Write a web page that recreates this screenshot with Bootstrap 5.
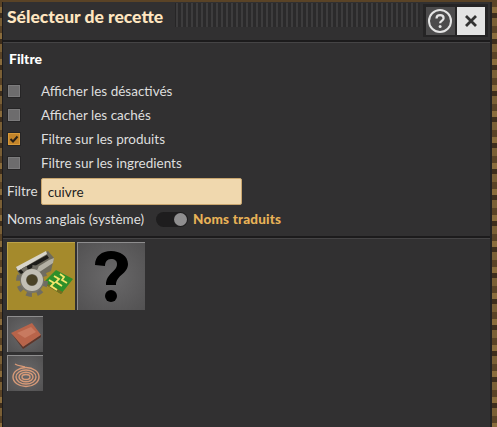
<!DOCTYPE html>
<html lang="fr">
<head>
    <meta charset="UTF-8">
    <title>Sélecteur de recette</title>
    <link href="https://cdn.jsdelivr.net/npm/bootstrap@5.3.3/dist/css/bootstrap.min.css" rel="stylesheet">
    <style>
        html, body { height: 100%; }
        body {
            background: repeating-linear-gradient(180deg, #5a4326 0 7px, #8a6c3c 7px 13px, #3d2d1c 13px 18px, #7a5f35 18px 26px);
            font-family: "Lato", "Liberation Sans", sans-serif;
            overflow: hidden;
            padding: 2px 5px 0 3px;
        }
        .panneau { height: 425px; background: #313031; color: #dedede; font-size: 13.5px; border-right: 2px solid #232223; box-shadow: -1px 0 0 #1c1b1c; }
        .entete { height: 38px; padding: 1px 2px 0 4px; }
        .titre { color: #ffe6c0; font-size: 17.5px; font-weight: 900; line-height: 28px; margin: 0; white-space: nowrap; }
        .poignee { flex: 1; height: 24px; margin: 0 3px 0 12px; background: repeating-linear-gradient(90deg, #3d3c3d 0 2px, #2b2a2b 2px 5px); border-left: 1px solid #262526; }
        .boutons { background: #252425; padding: 3px; gap: 2px; margin-top: 1px; height: 33px; width: 65px; }
        .bouton-carre { width: 29px; height: 28px; display: flex; align-items: center; justify-content: center; background: #4c4b4c; border-top: 1px solid #6a696a; border-bottom: 2px solid #1f1e1f; padding: 0; }
        .bouton-clair { background: #e4e4e4; }
        .separateur { height: 3px; background: #1c1b1c; border-bottom: 1px solid #454445; }
        .zone-filtre { height: 193px; padding: 6px 4px 0 4px; }
        .sous-titre { font-size: 14px; font-weight: 900; color: #fff; margin: 0 0 0 2px; line-height: 20px; height: 30px; }
        .ligne-case { height: 24px; display: flex; align-items: center; }
        .case-jeu { width: 12px; height: 12px; margin-right: 21px; margin-left: 1px; background: #6d6c6d; border: 1px solid #7c7b7c; box-shadow: 0 0 0 1px #262526; display: flex; align-items: center; justify-content: center; }
        .case-cochee { background: #c4852a; border-color: #d89a3a; }
        .ligne-saisie { display: flex; align-items: center; height: 27px; margin-top: 3px; gap: 3px; }
        .saisie-filtre { width: 201px; height: 27px; background: #f0d8ae; border: 1px solid #c9a66f; border-radius: 2px; color: #1e1e1e; padding: 0 6px; font-size: 13.5px; line-height: 25px; font-family: inherit; }
        .ligne-bascule { height: 24px; display: flex; align-items: center; margin-top: 2px; }
        .bascule { width: 32px; height: 15px; border-radius: 8px; background: #1e1d1e; margin: 0 5px 0 12px; position: relative; }
        .bascule::after { content: ""; position: absolute; right: 1px; top: 1px; width: 13px; height: 13px; border-radius: 50%; background: #8f8e8f; }
        .actif { color: #e8b257; font-weight: 900; letter-spacing: .2px; }
        .zone-recettes { padding: 3px 4px 0; }
        .tuile { display: flex; align-items: center; justify-content: center; background: radial-gradient(circle at 50% 50%, #6a696a, #525152); border-top: 1px solid #8e8d8e; border-left: 1px solid #8e8d8e; }
        .tuile-grande { width: 68px; height: 68px; }
        .tuile-or { background: #a58a2c; border-color: #bda348; }
        .tuile-petite { width: 36px; height: 36px; margin-bottom: 3px; }
        .rangee-grande { gap: 2px; margin-bottom: 6px; }
    </style>
</head>
<body>
<div class="panneau">
    <!-- Barre de titre -->
    <div class="entete d-flex align-items-start">
        <h1 class="titre">Sélecteur de recette</h1>
        <div class="poignee"></div>
        <div class="boutons d-flex">
            <button class="bouton-carre border-0" type="button" aria-label="Aide">
                <svg width="26" height="26" viewBox="0 0 26 26"><circle cx="13" cy="13" r="11" fill="none" stroke="#e4e4e4" stroke-width="2"/><path d="M9.500 10.500c0-2 1.600-3.300 3.600-3.300s3.500 1.200 3.500 3c0 2.600-3.500 2.700-3.500 5" fill="none" stroke="#e4e4e4" stroke-width="2.200"/><circle cx="13.100" cy="18.600" r="1.500" fill="#e4e4e4"/></svg>
            </button>
            <button class="bouton-carre bouton-clair border-0" type="button" aria-label="Fermer">
                <svg width="14" height="14" viewBox="0 0 14 14"><path d="M2 2l10 10M12 2L2 12" stroke="#333" stroke-width="2.800"/></svg>
            </button>
        </div>
    </div>
    <div class="separateur"></div>

    <!-- Filtres -->
    <div class="zone-filtre">
        <h2 class="sous-titre">Filtre</h2>
        <div class="ligne-case"><span class="case-jeu"></span><span>Afficher les désactivés</span></div>
        <div class="ligne-case"><span class="case-jeu"></span><span>Afficher les cachés</span></div>
        <div class="ligne-case">
            <span class="case-jeu case-cochee"><svg width="10" height="10" viewBox="0 0 10 10"><path d="M1.500 5l2.500 2.500 4.500-5" fill="none" stroke="#2a2118" stroke-width="2"/></svg></span>
            <span>Filtre sur les produits</span>
        </div>
        <div class="ligne-case"><span class="case-jeu"></span><span>Filtre sur les ingredients</span></div>
        <div class="ligne-saisie"><span>Filtre</span><input class="saisie-filtre" type="text" value="cuivre"></div>
        <div class="ligne-bascule"><span>Noms anglais (système)</span><span class="bascule"></span><span class="actif">Noms traduits</span></div>
    </div>
    <div class="separateur"></div>

    <!-- Recettes -->
    <div class="zone-recettes">
        <div class="d-flex rangee-grande">
            <div class="tuile tuile-grande tuile-or">
                <svg width="67" height="67" viewBox="0 0 67 67">
                    <path d="M8 25L40 8l6 7-3 13-28 12z" fill="#6e6b5e"/>
                    <path d="M8 24L38 8l1 3L10 28z" fill="#d8d5ca"/>
                    <path d="M10 28L39 12l2 3L13 31z" fill="#1d1c18"/>
                    <path d="M15 33L41 17l5-2-1 5-24 16z" fill="#b4b1a4"/>
                    <path d="M48 27l17 9-12 15-18-11z" fill="#2f8f2a"/>
                    <path d="M35 40l18 11 2-2-19-10z" fill="#7a6a1e"/>
                    <path d="M41 37l5 3-3 3 6 4M46 33l5 3-3 3 6 4M52 31l4 3-2 3 5 3" fill="none" stroke="#f5e66a" stroke-width="1.800"/>
                    <circle cx="24" cy="38" r="13.500" fill="none" stroke="#6f6c62" stroke-width="5" stroke-dasharray="5.500 5.100"/>
                    <circle cx="24" cy="38" r="12" fill="#77746a"/>
                    <circle cx="24" cy="37" r="8.500" fill="none" stroke="#c2bfb4" stroke-width="5"/>
                    <circle cx="24" cy="37" r="5.500" fill="#4a4226"/>
                </svg>
            </div>
            <div class="tuile tuile-grande">
                <svg width="44" height="58" viewBox="0 0 44 58"><path d="M5 17C5 8 12 3 21 3s17 5 17 13c0 10-12 11-12 21H16c0-12 11-13 11-21 0-3-2-5-6-5s-6 3-6 7z" fill="#000"/><circle cx="21" cy="48" r="6" fill="#000"/></svg>
            </div>
        </div>
        <div class="tuile tuile-petite">
            <svg width="34" height="30" viewBox="0 0 34 30"><path d="M2 13L23 3l9 12-18 12z" fill="#b8644a"/><path d="M8 13l14-6 5 5-11 6z" fill="#c87a60"/><path d="M2 13l12 14 18-12v2L14 29z" fill="#5e3428"/></svg>
        </div>
        <div class="tuile tuile-petite">
            <svg width="32" height="30" viewBox="0 0 32 30" fill="none" stroke="#d89a78" stroke-width="1.400"><path d="M5 5c3 2 7 2 10 3"/><ellipse cx="16" cy="18" rx="13" ry="9.500"/><ellipse cx="16" cy="18" rx="10" ry="7"/><ellipse cx="16" cy="18" rx="7" ry="4.800"/><ellipse cx="16" cy="18" rx="4" ry="2.500"/></svg>
        </div>
    </div>
</div>
</body>
</html>
